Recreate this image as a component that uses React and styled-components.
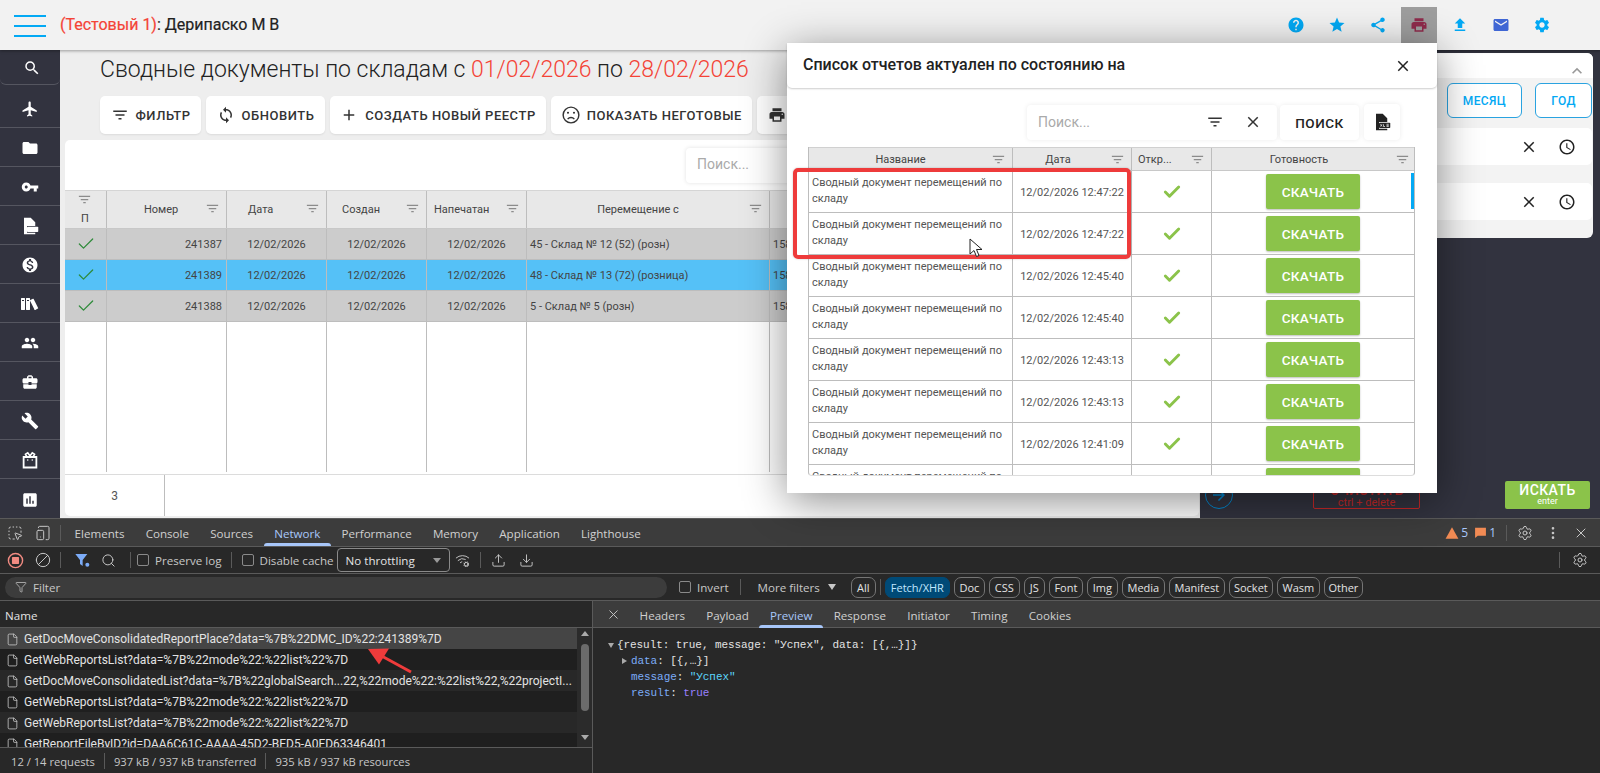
import React from "react";
import styled, { createGlobalStyle } from "styled-components";
import {
  MdSearch, MdFlight, MdFolder, MdVpnKey, MdMonetizationOn, MdPeople, MdBusinessCenter, MdBuild, MdAssessment,
  MdFilterList, MdSync, MdAdd, MdPrint, MdHelp, MdStar, MdShare, MdFileUpload, MdEmail,
  MdSettings, MdClose, MdAccessTime, MdExpandLess, MdArrowForward,
} from "react-icons/md";
import { ImBooks } from "react-icons/im";
import { Ban, Search, Upload, Download, Settings, EllipsisVertical, X, File, Filter, Check, WifiCog, SquareDashedMousePointer, TabletSmartphone } from "lucide-react";

const Global = createGlobalStyle`
  html, body { margin: 0; padding: 0; height: 100%; overflow: hidden; background: #282828; }
  body { font-family: Roboto, "Liberation Sans", sans-serif; }
  * { box-sizing: border-box; }
`;

const Page = styled.div`
  position: relative; width: 1600px; height: 773px; overflow: hidden;
  display: flex; flex-direction: column;
`;
const TopBar = styled.header`
  height: 50px; flex: none; display: flex; align-items: center;
  background: #f2f2f2; padding: 0 38px 0 14px; position: relative; z-index: 2;
  box-shadow: 0 1px 3px rgba(0,0,0,.35);
`;
const Burger = styled.div`
  width: 32px; height: 22px; margin-top: 1px; display: flex; flex-direction: column; justify-content: space-between;
  span { display: block; height: 2px; background: #03a9f4; }
`;
const UserTitle = styled.div`
  margin-left: 14px; font-size: 16px; color: #222; font-weight: 400; -webkit-text-stroke: .2px #222;
  margin-top: -1px;
  em { font-style: normal; color: #f44336; -webkit-text-stroke: .2px #f44336; }
`;
const TopIcons = styled.div`margin-left: auto; display: flex; align-items: center;`;
const TopIcon = styled.div`
  width: 41px; height: 50px; display: flex; align-items: center; justify-content: center; color: ${p => p.$color || "#03a9f4"};
  font-size: 18px;
  > span { width: 36px; height: 36px; display: flex; align-items: center; justify-content: center; background: ${p => p.$active ? "#9e9e9e" : "transparent"}; }
`;
const Body = styled.div`height: 468px; flex: none; display: flex;`;
const Sidebar = styled.nav`width: 60px; flex: none; background: #32333f; display: flex; flex-direction: column;`;
const SideItem = styled.div`
  height: ${p => p.$first ? 35 : 39}px; display: flex; align-items: center; justify-content: center; color: #fff;
  font-size: 18px; border-bottom: 1px solid #555660; padding-top: 2px;
  ${p => p.$first ? "border-radius: 0 0 6px 6px; margin-bottom: 4px; padding-left: 4px;" : ""}
  ${p => p.$last ? "border-bottom: none;" : ""}
`;
const Content = styled.main`width: 1140px; flex: none; background: #eeeeee; display: flex; flex-direction: column; overflow: hidden;`;
const PageTitle = styled.h1`
  margin: 5px 0 0 40px; height: 36px; line-height: 30px; font-size: 23px; font-weight: 300; color: #222; white-space: nowrap;
  span { color: #f44336; }
`;
const Toolbar = styled.div`display: flex; gap: 5px; margin: 5px 0 0 40px; height: 38px;`;
const ToolButton = styled.div`
  background: #fff; border-radius: 5px; height: 38px; display: flex; align-items: center; gap: 7px; padding: 0 10.5px;
  font-size: 13px; font-weight: 500; letter-spacing: .52px; color: #333; white-space: nowrap; box-shadow: 0 1px 2px rgba(0,0,0,.08);
  svg { font-size: 18px; flex: none; }
`;
const Card = styled.section`
  margin: 6px 1px 2px 5px; flex: 1; background: #fff; border-radius: 5px; display: flex; flex-direction: column; overflow: hidden;
`;
const CardTop = styled.div`height: 50px; flex: none; display: flex; padding: 8px 0 0 621px;`;
const MainSearch = styled.div`
  width: 200px; height: 35px; border-radius: 4px; background: #fff; box-shadow: 0 0 4px rgba(0,0,0,.12);
  padding: 0 11px; line-height: 33px; font-size: 14px; color: #aaa;
`;
const MAIN_COLS = "42px 120px 100px 100px 100px 243px 1fr";
const MainHead = styled.div`
  height: 39px; flex: none; display: grid; grid-template-columns: ${MAIN_COLS}; background: #e8e8e8;
  border-top: 1px solid #d5d5d5; border-bottom: 1px solid #c8c8c8;
`;
const HeadCell = styled.div`
  position: relative; display: flex; align-items: center; justify-content: ${p => p.$left ? "flex-start" : "center"};
  padding: ${p => p.$left ? "0 0 0 " + p.$left + "px" : "0 " + (p.$pr ?? 20) + "px 0 0"}; font-size: 11px; color: #444;
  border-right: ${p => p.$end ? "none" : "1px solid #bdbdbd"}; white-space: nowrap;
  > svg { position: absolute; right: ${p => p.$fr || 6}px; top: ${p => p.$ft ?? 10}px; font-size: 15px; color: #8c8c8c; }
`;
const FlagHead = styled(HeadCell)`padding-top: 18px;`;
const MainRows = styled.div`flex: 1; position: relative; display: flex; flex-direction: column; min-height: 0;`;
const MainRow = styled.div`
  height: 31px; flex: none; display: grid; grid-template-columns: ${MAIN_COLS}; background: ${p => p.$selected ? "#55c1f7" : "#cccccc"};
  border-bottom: 1px solid #bdbdbd; color: #444; font-size: 11px;
`;
const MainEmpty = styled.div`flex: 1; display: grid; grid-template-columns: ${MAIN_COLS};`;
const Cell = styled.div`
  display: flex; align-items: center; justify-content: ${p => p.$align || "center"}; padding: 0 ${p => p.$pad ?? 3}px;
  border-right: 1px solid #bdbdbd; white-space: nowrap; overflow: hidden;
`;
const MainFooter = styled.div`height: 42px; flex: none; margin-top: 2px; border-top: 1px solid #dcdcdc; display: flex;`;
const TotalCell = styled.div`width: 100px; display: flex; align-items: center; justify-content: center; font-size: 12px; color: #555; border-right: 1px solid #bdbdbd;`;

const RightCol = styled.aside`flex: 1; background: #32333f; display: flex; flex-direction: column; padding-top: 3px;`;
const RightPanel = styled.div`
  height: 185px; width: 393px; background: #f3f3f3; border-radius: 0 6px 6px 0; display: flex; flex-direction: column; flex: none;
`;
const RightHead = styled.div`height: 25px; flex: none; background: #fff; display: flex; justify-content: flex-end; align-items: center; padding: 10px 6px 0 0; color: #999; font-size: 20px; border-radius: 0 6px 0 0;`;
const RangeRow = styled.div`display: flex; justify-content: flex-end; gap: 13px; padding: 5px 1px 0 0;`;
const RangeButton = styled.div`
  height: 35px; width: ${p => p.$w}px; border: 1px solid #2aa3e0; border-radius: 6px; background: #fff; color: #03a9f4;
  font-size: 12px; font-weight: 500; letter-spacing: .4px; display: flex; align-items: center; justify-content: center;
`;
const FilterRow = styled.div`
  height: 37px; margin: ${p => p.$mt}px 1px 0 0; background: #fff; border-radius: 5px; display: flex; align-items: center; justify-content: flex-end;
  color: #222; font-size: 18px; gap: 20px; padding-right: 16px;
`;
const RightBottom = styled.div`margin-top: 243px; display: flex; align-items: flex-start; padding: 0 10px 0 5px; height: 28px;`;
const GoCircle = styled.div`width: 28px; height: 28px; border: 1px solid #0288d1; border-radius: 50%; display: flex; align-items: center; justify-content: center; color: #0288d1; font-size: 18px;`;
const ClearButton = styled.div`
  margin-left: 80px; width: 107px; height: 28px; border: 1px solid #c62828; border-radius: 2px; color: #c62828; text-align: center;
  font-size: 14px; font-weight: 500; line-height: 15px; padding-top: 1px;
  small { display: block; font-size: 11px; font-weight: 400; line-height: 10px; }
`;
const SearchButton = styled.div`
  margin-left: 85px; width: 85px; height: 28px; background: #8bc34a; border-radius: 2px; color: #fff; text-align: center;
  font-size: 14px; font-weight: 500; line-height: 14px; padding-top: 2px; letter-spacing: .4px;
  small { display: block; font-size: 9px; font-weight: 400; line-height: 9px; letter-spacing: 0; }
`;

const Modal = styled.div`
  position: absolute; left: 787px; top: 43px; width: 650px; height: 450px; background: #fff; z-index: 5;
  box-shadow: 0 8px 40px rgba(0,0,0,.45); display: flex; flex-direction: column;
`;
const ModalHead = styled.div`
  height: 45px; flex: none; display: flex; align-items: center; justify-content: space-between; padding: 0 25px 2px 16px;
  font-size: 16px; font-weight: 500; color: #222; border-radius: 0 0 5px 5px; box-shadow: 0 1px 2px rgba(0,0,0,.2);
  svg { font-size: 18px; margin-top: 3px; }
`;
const ModalSearchRow = styled.div`height: 36px; margin-top: 16px; display: flex; padding-left: 240px; gap: 3px; flex: none;`;
const ModalSearch = styled.div`
  width: 250px; height: 35px; margin-top: 1px; background: #fff; border-radius: 4px; box-shadow: 0 0 5px rgba(0,0,0,.08); display: flex; align-items: center;
  padding: 0 15px 2px 11px; font-size: 14px; color: #aaa;
  span { flex: 1; }
  svg { color: #333; font-size: 18px; margin-left: 20px; }
`;
const ModalSearchBtn = styled.div`
  width: 79px; height: 35px; margin-top: 1px; background: #fff; border-radius: 4px; box-shadow: 0 0 5px rgba(0,0,0,.08); font-size: 13.5px; font-weight: 500; letter-spacing: .5px;
  color: #222; display: flex; align-items: center; justify-content: center;
`;
const ModalIconBtn = styled.div`width: 36px; height: 36px; margin-left: 2px; background: #fff; border-radius: 4px; box-shadow: 0 0 5px rgba(0,0,0,.08); display: flex; align-items: center; justify-content: center; color: #222;`;
const MOD_COLS = "204px 119px 80px 204px";
const ModalTable = styled.div`
  width: 607px; margin: 7px 0 0 21px; height: 329px; overflow: hidden; border-right: 1px solid #bdbdbd; border-left: 1px solid #bdbdbd; border-bottom: 1px solid #ddd;
  border-radius: 0 0 4px 4px; flex: none;
`;
const ModalHeadRow = styled.div`height: 24px; display: grid; grid-template-columns: ${MOD_COLS}; background: #e8e8e8; border-top: 1px solid #d0d0d0; border-bottom: 1px solid #c8c8c8;`;
const ModalRow = styled.div`
  position: relative; height: 42px; display: grid; grid-template-columns: ${MOD_COLS}; border-bottom: 1px solid #bdbdbd; font-size: 11px; color: #555;
`;
const NameCell = styled.div`border-right: 1px solid #bdbdbd; padding: 4px 8px 0 3px; line-height: 16px;`;
const DateCell = styled.div`border-right: 1px solid #bdbdbd; display: flex; align-items: center; justify-content: center; white-space: nowrap; padding-top: 1px;`;
const CheckCell = styled.div`border-right: 1px solid #bdbdbd; display: flex; align-items: center; justify-content: center; color: #8bc34a;`;
const GetCell = styled.div`display: flex; justify-content: center; padding: 3px 2px 0 0;`;
const GetButton = styled.div`
  width: 94px; height: 35px; background: #8bc34a; border-radius: 2px; color: #fff; font-size: 13.5px; font-weight: 500; letter-spacing: .3px;
  display: flex; align-items: center; justify-content: center; box-shadow: 0 1px 2px rgba(0,0,0,.25);
`;
const ScrollMark = styled.div`position: absolute; right: 0; top: 2px; width: 3px; height: 36px; background: #03a9f4;`;

const RedFrame = styled.div`position: absolute; left: 793px; top: 168px; width: 338px; height: 91px; border: 4px solid #ee3b3b; border-radius: 5px; z-index: 7; box-shadow: 0 0 2px rgba(0,0,0,.25);`;
const CursorMark = styled.svg`position: absolute; left: 969px; top: 238px; z-index: 8; overflow: visible;`;
const ArrowMark = styled.svg`position: absolute; left: 365px; top: 645px; z-index: 8; overflow: visible;`;

const DevTools = styled.section`flex: 1; background: #282828; color: #c7c7c7; display: flex; flex-direction: column; font-size: 11.6px; border-top: 1px solid #5a5a5a; font-family: "Open Sans", Roboto, sans-serif;`;
const DevTabs = styled.div`height: 28px; flex: none; background: #3c3c3c; display: flex; align-items: center; border-bottom: 1px solid #5a5a5a; color: #d0d0d0;`;
const DevIcon = styled.div`width: ${p => p.$w || 28}px; display: flex; align-items: center; justify-content: center; color: ${p => p.$color || "#c7c7c7"}; flex: none; height: 100%;`;
const DevSep = styled.div`width: 1px; height: 16px; background: #5a5a5a; margin: 0 ${p => p.$r ?? p.$m ?? 6}px 0 ${p => p.$m ?? 6}px; flex: none;`;
const DevTab = styled.div`
  height: 27px; line-height: 29px; padding: 0 10.6px; white-space: nowrap; font-size: 11.6px; position: relative;
  color: ${p => p.$active ? "#a8c7fa" : "#d0d0d0"};
  ${p => p.$active ? "&::after { content: ''; position: absolute; left: 0; right: 0; bottom: 0; height: 3px; border-radius: 3px 3px 0 0; background: #a8c7fa; }" : ""}
`;
const DevRightTools = styled.div`margin-left: auto; display: flex; align-items: center; height: 100%; padding-right: ${p => p.$pr ?? 5}px;`;
const Badge = styled.span`display: flex; align-items: center; gap: 2px; color: #a8c7fa; margin-right: 6px; font-size: 12px;`;
const DevBar = styled.div`height: 27px; flex: none; display: flex; align-items: center; border-bottom: 1px solid #5a5a5a; background: #282828;`;
const CheckLabel = styled.label`display: flex; align-items: center; gap: 6px; white-space: nowrap; color: #c7c7c7; margin-left: ${p => p.$ml || 0}px;`;
const FakeBox = styled.span`display: block; width: 12px; height: 12px; border: 1px solid #8a8a8a; border-radius: 2px;`;
const ThrottleSelect = styled.div`
  width: 113px; height: 24px; border: 1px solid #8a8a8a; border-radius: 4px; display: flex; align-items: center; padding: 0 8px; justify-content: space-between; color: #e3e3e3; flex: none;
  margin-left: 3px;
  &::after { content: ""; border-left: 4px solid transparent; border-right: 4px solid transparent; border-top: 5px solid #999; }
`;
const FilterPill = styled.div`margin-left: 5px; width: 662px; height: 21px; border-radius: 11px; background: #3c3c3c; display: flex; align-items: center; gap: 6px; padding-left: 10px; color: #c7c7c7; flex: none;`;
const Chip = styled.div`
  height: 21px; line-height: 19px; padding: 0; width: ${p => p.$w}px; text-align: center; border-radius: 7px; border: 1px solid ${p => p.$active ? "#004a77" : "#757575"};
  background: ${p => p.$active ? "#004a77" : "transparent"}; color: ${p => p.$active ? "#c2e7ff" : "#e3e3e3"}; flex: none; margin-right: 4px; white-space: nowrap; font-size: 11px;
`;
const MoreFilters = styled.div`display: flex; align-items: center; gap: 8px; margin: 0 15px 0 6px; white-space: nowrap; color: #c7c7c7;
  &::after { content: ""; border-left: 4px solid transparent; border-right: 4px solid transparent; border-top: 6px solid #c7c7c7; }
`;
const Split = styled.div`flex: 1; display: flex; min-height: 0;`;
const ListCol = styled.div`width: 593px; flex: none; display: flex; flex-direction: column; border-right: 1px solid #5a5a5a;`;
const ListHead = styled.div`height: 27px; flex: none; border-bottom: 1px solid #5a5a5a; padding-left: 5px; line-height: 29px; color: #e3e3e3;`;
const ListArea = styled.div`height: 119px; flex: none; display: flex; overflow: hidden; position: relative;`;
const ListRows = styled.div`flex: 1; min-width: 0;`;
const ListRow = styled.div`
  height: 21px; display: flex; align-items: center; gap: 5px; padding: 1px 0 0 6px; white-space: nowrap; color: #e3e3e3;
  font-family: Roboto, sans-serif; font-size: 12px;
  background: ${p => p.$selected ? "#454545" : p.$odd ? "#1f1f1f" : "#282828"};
  svg { flex: none; color: #c7c7c7; }
`;
const ScrollTrack = styled.div`width: 15px; flex: none; background: #2b2b2b; display: flex; flex-direction: column; align-items: center; padding-top: 3px; position: relative;`;
const ScrollArrow = styled.span`
  width: 0; height: 0; border-left: 4px solid transparent; border-right: 4px solid transparent;
  ${p => p.$down ? "border-top: 5px solid #aaa; position: absolute; bottom: 7px;" : "border-bottom: 5px solid #aaa;"}
`;
const ScrollThumb = styled.div`width: 8px; height: 67px; margin-top: 8px; background: #6b6b6b; border-radius: 4px;`;
const ListFooter = styled.div`height: 27px; flex: none; border-top: 1px solid #5a5a5a; display: flex; align-items: center; padding-left: 11px; color: #c7c7c7; background: #282828; font-size: 11.2px;`;
const PreviewCol = styled.div`flex: 1; display: flex; flex-direction: column; min-width: 0;`;
const PreviewTabs = styled.div`height: 27px; flex: none; background: #3c3c3c; border-bottom: 1px solid #5a5a5a; display: flex; align-items: center; padding-left: 4px;`;
const JsonArea = styled.div`flex: 1; padding: 9px 0 0 15px; font-family: "Liberation Mono", monospace; font-size: 11px; line-height: 16px; letter-spacing: -.07px; color: #e3e3e3;`;
const JsonLine = styled.div`white-space: pre; padding-left: ${p => p.$indent || 0}px; display: flex; align-items: center;`;
const Caret = styled.span`
  display: inline-block; margin-right: ${p => p.$mr ?? 3}px; width: 0; height: 0;
  ${p => p.$open
    ? "border-left: 3.5px solid transparent; border-right: 3.5px solid transparent; border-top: 5px solid #aaa;"
    : "border-top: 3.5px solid transparent; border-bottom: 3.5px solid transparent; border-left: 5px solid #aaa;"}
`;
const Key = styled.span`color: #7cacf8;`;
const Str = styled.span`color: #5cd5fb;`;
const Bool = styled.span`color: #9980ff;`;
const MirrorBan = styled(Ban)`transform: scaleX(-1);`;

const XlsIcon = ({ size = 18 }) => (
  <svg width={size} height={size} viewBox="0 0 24 24" fill="currentColor">
    <path d="M4 1h9l6 6v5H8v9h11v2H4z" />
    <rect x="8" y="13" width="15" height="7" rx="1" />
    <path d="M10 15l2 3M12 15l-2 3M14 15v3h2M18 15h3M18 16.500h3M18 18h3" stroke="#fff" strokeWidth=".9" fill="none" />
  </svg>
);
const BagIcon = () => (
  <svg width="18" height="18" viewBox="0 0 24 24" fill="none" stroke="currentColor">
    <path d="M3.500 8h17v14h-17z" strokeWidth="2.400" />
    <path d="M8 8 6 4.500 9 2.500l3 4 3-4 3 2L16 8" strokeWidth="2.200" />
    <path d="M9 11v2M15 11v2" strokeWidth="1.500" />
  </svg>
);
const FrownIcon = () => (
  <svg width="18" height="18" viewBox="0 0 24 24" fill="none" stroke="currentColor" strokeWidth="1.900">
    <circle cx="12" cy="12" r="10.500" />
    <path d="M7.500 17.500c2.500-3 6.500-3 9 0" />
    <circle cx="8" cy="9" r="1.400" fill="currentColor" stroke="none" />
    <circle cx="16" cy="9" r="1.400" fill="currentColor" stroke="none" />
  </svg>
);
const HeadFilter = () => <MdFilterList />;

const mainRows = [
  ["241387", "45 - Склад № 12 (52) (розн)", false],
  ["241389", "48 - Склад № 13 (72) (розница)", true],
  ["241388", "5 - Склад № 5 (розн)", false],
];
const modalRows = ["12:47:22", "12:47:22", "12:45:40", "12:45:40", "12:43:13", "12:43:13", "12:41:09", "12:41:09"];
const chips = [["All", 25], ["Fetch/XHR", 65, true], ["Doc", 31], ["CSS", 31], ["JS", 21], ["Font", 34], ["Img", 31], ["Media", 43], ["Manifest", 56], ["Socket", 44], ["Wasm", 43], ["Other", 39]];
const netRows = [
  "GetDocMoveConsolidatedReportPlace?data=%7B%22DMC_ID%22:241389%7D",
  "GetWebReportsList?data=%7B%22mode%22:%22list%22%7D",
  "GetDocMoveConsolidatedList?data=%7B%22globalSearch...22,%22mode%22:%22list%22,%22projectI...",
  "GetWebReportsList?data=%7B%22mode%22:%22list%22%7D",
  "GetWebReportsList?data=%7B%22mode%22:%22list%22%7D",
  "GetReportFileByID?id=DAA6C61C-AAAA-45D2-BED5-A0FD63346401",
];

export default function App() {
  return (
    <Page>
      <Global />
      <TopBar>
        <Burger><span /><span /><span /></Burger>
        <UserTitle><em>(Тестовый 1)</em>: Дерипаско М В</UserTitle>
        <TopIcons>
          <TopIcon><span><MdHelp /></span></TopIcon>
          <TopIcon><span><MdStar /></span></TopIcon>
          <TopIcon><span><MdShare /></span></TopIcon>
          <TopIcon $active $color="#8e2b4b"><span><MdPrint /></span></TopIcon>
          <TopIcon><span><MdFileUpload /></span></TopIcon>
          <TopIcon $color="#3f66d4"><span><MdEmail /></span></TopIcon>
          <TopIcon><span><MdSettings /></span></TopIcon>
        </TopIcons>
      </TopBar>
      <Body>
        <Sidebar>
          <SideItem $first><MdSearch /></SideItem>
          <SideItem><MdFlight /></SideItem>
          <SideItem><MdFolder /></SideItem>
          <SideItem><MdVpnKey /></SideItem>
          <SideItem><XlsIcon /></SideItem>
          <SideItem><MdMonetizationOn /></SideItem>
          <SideItem><ImBooks /></SideItem>
          <SideItem><MdPeople /></SideItem>
          <SideItem><MdBusinessCenter /></SideItem>
          <SideItem><MdBuild /></SideItem>
          <SideItem><BagIcon /></SideItem>
          <SideItem $last><MdAssessment /></SideItem>
        </Sidebar>
        <Content>
          <PageTitle>Сводные документы по складам с <span>01/02/2026</span> по <span>28/02/2026</span></PageTitle>
          <Toolbar>
            <ToolButton><MdFilterList />ФИЛЬТР</ToolButton>
            <ToolButton><MdSync />ОБНОВИТЬ</ToolButton>
            <ToolButton><MdAdd />СОЗДАТЬ НОВЫЙ РЕЕСТР</ToolButton>
            <ToolButton><FrownIcon />ПОКАЗАТЬ НЕГОТОВЫЕ</ToolButton>
            <ToolButton><MdPrint /></ToolButton>
          </Toolbar>
          <Card>
            <CardTop><MainSearch>Поиск...</MainSearch></CardTop>
            <MainHead>
              <FlagHead $left={16} $ft={1} $fr={14}><HeadFilter />П</FlagHead>
              <HeadCell $left={37}>Номер<HeadFilter /></HeadCell>
              <HeadCell $left={21}>Дата<HeadFilter /></HeadCell>
              <HeadCell $left={15}>Создан<HeadFilter /></HeadCell>
              <HeadCell $left={7}>Напечатан<HeadFilter /></HeadCell>
              <HeadCell>Перемещение с<HeadFilter /></HeadCell>
              <HeadCell />
            </MainHead>
            <MainRows>
              {mainRows.map(([n, from, sel]) => (
                <MainRow key={n} $selected={sel}>
                  <Cell><Check size={20} strokeWidth={1.5} color="#2e8b3a" /></Cell>
                  <Cell $align="flex-end" $pad={4}>{n}</Cell>
                  <Cell>12/02/2026</Cell>
                  <Cell>12/02/2026</Cell>
                  <Cell>12/02/2026</Cell>
                  <Cell $align="flex-start">{from}</Cell>
                  <Cell $align="flex-start">158</Cell>
                </MainRow>
              ))}
              <MainEmpty>
                {[0, 1, 2, 3, 4, 5].map(i => <Cell key={i} />)}
              </MainEmpty>
            </MainRows>
            <MainFooter><TotalCell>3</TotalCell></MainFooter>
          </Card>
        </Content>
        <RightCol>
          <RightPanel>
            <RightHead><MdExpandLess /></RightHead>
            <RangeRow>
              <RangeButton $w={75}>МЕСЯЦ</RangeButton>
              <RangeButton $w={57}>ГОД</RangeButton>
            </RangeRow>
            <FilterRow $mt={10}><MdClose /><MdAccessTime /></FilterRow>
            <FilterRow $mt={18}><MdClose /><MdAccessTime /></FilterRow>
          </RightPanel>
          <RightBottom>
            <GoCircle><MdArrowForward /></GoCircle>
            <ClearButton>ОЧИСТИТЬ<small>ctrl + delete</small></ClearButton>
            <SearchButton>ИСКАТЬ<small>enter</small></SearchButton>
          </RightBottom>
        </RightCol>
      </Body>
      <DevTools>
        <DevTabs>
          <DevIcon $w={30}><SquareDashedMousePointer size={16} strokeWidth={1.5} /></DevIcon>
          <DevIcon $w={26}><TabletSmartphone size={16} strokeWidth={1.5} /></DevIcon>
          <DevSep $m={4} $r={3} />
          <DevTab>Elements</DevTab>
          <DevTab>Console</DevTab>
          <DevTab>Sources</DevTab>
          <DevTab $active>Network</DevTab>
          <DevTab>Performance</DevTab>
          <DevTab>Memory</DevTab>
          <DevTab>Application</DevTab>
          <DevTab>Lighthouse</DevTab>
          <DevRightTools>
            <Badge><svg width="14" height="14" viewBox="0 0 24 24" fill="#f28b54"><path d="M12 2 23 22H1z" /></svg>5</Badge>
            <Badge><svg width="13" height="13" viewBox="0 0 24 24" fill="#f28b54"><path d="M2 3h20v15H7l-5 4z" /></svg>1</Badge>
            <DevSep $m={4} />
            <DevIcon><Settings size={16} strokeWidth={1.5} /></DevIcon>
            <DevIcon><EllipsisVertical size={16} /></DevIcon>
            <DevIcon><X size={16} strokeWidth={1.5} /></DevIcon>
          </DevRightTools>
        </DevTabs>
        <DevBar>
          <DevIcon $w={30}><svg width="17" height="17" viewBox="0 0 24 24"><circle cx="12" cy="12" r="10" fill="none" stroke="#f28b82" strokeWidth="2" /><rect x="7" y="7" width="10" height="10" rx="1" fill="#f28b82" /></svg></DevIcon>
          <DevIcon $w={26}><MirrorBan size={16} strokeWidth={1.5} /></DevIcon>
          <DevSep $m={4} $r={8} />
          <DevIcon $w={26} $color="#7cacf8"><svg width="16" height="16" viewBox="0 0 24 24" fill="currentColor"><path d="M2 3h18l-7 9v9l-4-3v-6z" /><circle cx="20" cy="19" r="3" /></svg></DevIcon>
          <DevIcon $w={26}><Search size={15} strokeWidth={1.6} /></DevIcon>
          <DevSep $m={9} $r={1} />
          <CheckLabel $ml={5}><FakeBox />Preserve log</CheckLabel>
          <DevSep $m={9} />
          <CheckLabel $ml={1}><FakeBox />Disable cache</CheckLabel>
          <ThrottleSelect>No throttling</ThrottleSelect>
          <DevIcon $w={26}><WifiCog size={15} strokeWidth={1.5} /></DevIcon>
          <DevSep $m={4} />
          <DevIcon $w={28}><Upload size={15} strokeWidth={1.5} /></DevIcon>
          <DevIcon $w={28}><Download size={15} strokeWidth={1.5} /></DevIcon>
          <DevRightTools $pr={6}>
            <DevSep $m={6} />
            <DevIcon><Settings size={16} strokeWidth={1.5} /></DevIcon>
          </DevRightTools>
        </DevBar>
        <DevBar>
          <FilterPill><Filter size={12} strokeWidth={1.5} />Filter</FilterPill>
          <CheckLabel $ml={12}><FakeBox />Invert</CheckLabel>
          <DevSep $m={11} />
          <MoreFilters>More filters</MoreFilters>
          {chips.map(([t, w, a], i) => (
            <React.Fragment key={t}>
              <Chip $w={w} $active={a}>{t}</Chip>
              {i === 0 && <DevSep $m={0} $r={4} />}
            </React.Fragment>
          ))}
        </DevBar>
        <Split>
          <ListCol>
            <ListHead>Name</ListHead>
            <ListArea>
              <ListRows>
                {netRows.map((r, i) => (
                  <ListRow key={i} $selected={i === 0} $odd={i % 2 === 1}><File size={13} strokeWidth={1.5} />{r}</ListRow>
                ))}
              </ListRows>
              <ScrollTrack><ScrollArrow /><ScrollThumb /><ScrollArrow $down /></ScrollTrack>
            </ListArea>
            <ListFooter>
              12 / 14 requests<DevSep $m={9} />937 kB / 937 kB transferred<DevSep $m={9} />935 kB / 937 kB resources
            </ListFooter>
          </ListCol>
          <PreviewCol>
            <PreviewTabs>
              <DevIcon $w={32}><X size={15} strokeWidth={1.5} /></DevIcon>
              <DevTab>Headers</DevTab>
              <DevTab>Payload</DevTab>
              <DevTab $active>Preview</DevTab>
              <DevTab>Response</DevTab>
              <DevTab>Initiator</DevTab>
              <DevTab>Timing</DevTab>
              <DevTab>Cookies</DevTab>
            </PreviewTabs>
            <JsonArea>
              <JsonLine><Caret $open />{'{result: true, message: "Успех", data: [{,…}]}'}</JsonLine>
              <JsonLine $indent={14}><Caret $mr={4} /><Key>data</Key>: [{'{,…}'}]</JsonLine>
              <JsonLine $indent={23}><Key>message</Key>: <Str>"Успех"</Str></JsonLine>
              <JsonLine $indent={23}><Key>result</Key>: <Bool>true</Bool></JsonLine>
            </JsonArea>
          </PreviewCol>
        </Split>
      </DevTools>
      <Modal>
        <ModalHead>Список отчетов актуален по состоянию на<MdClose /></ModalHead>
        <ModalSearchRow>
          <ModalSearch><span>Поиск...</span><MdFilterList /><MdClose /></ModalSearch>
          <ModalSearchBtn>ПОИСК</ModalSearchBtn>
          <ModalIconBtn><XlsIcon /></ModalIconBtn>
        </ModalSearchRow>
        <ModalTable>
          <ModalHeadRow>
            <HeadCell $ft={4}>Название<HeadFilter /></HeadCell>
            <HeadCell $ft={4} $pr={28}>Дата<HeadFilter /></HeadCell>
            <HeadCell $ft={4} $left={6}>Откр...<HeadFilter /></HeadCell>
            <HeadCell $ft={4} $pr={30} $end>Готовность<HeadFilter /></HeadCell>
          </ModalHeadRow>
          {modalRows.map((t, i) => (
            <ModalRow key={i}>
              <NameCell>Сводный документ перемещений по складу</NameCell>
              <DateCell>12/02/2026 {t}</DateCell>
              <CheckCell><Check size={20} strokeWidth={3.5} /></CheckCell>
              <GetCell><GetButton>СКАЧАТЬ</GetButton></GetCell>
              {i === 0 && <ScrollMark />}
            </ModalRow>
          ))}
        </ModalTable>
      </Modal>
      <RedFrame />
      <CursorMark width="14" height="20" viewBox="0 0 14 20">
        <path d="M1 1v15l4-3.500 2.500 6 2.500-1-2.500-6H13z" fill="#fff" stroke="#222" strokeWidth="1" />
      </CursorMark>
      <ArrowMark width="50" height="30" viewBox="0 0 50 30">
        <path d="M46 27 13 9" stroke="#ee3b3b" strokeWidth="3" />
        <path d="M3 4l21-.5-10 16z" fill="#ee3b3b" />
      </ArrowMark>
    </Page>
  );
}
